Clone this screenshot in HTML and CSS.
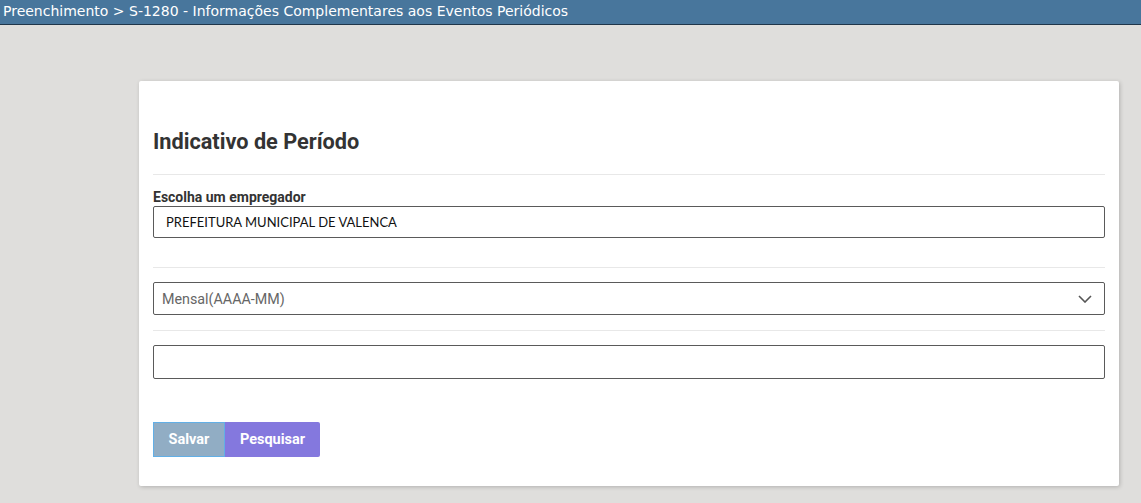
FILE: index.html
```html
<!DOCTYPE html>
<html>
<head>
<meta charset="utf-8">
<title>S-1280</title>
<link rel="stylesheet" href="styles.css">
</head>
<body>
<div id="top_bar">Preenchimento &gt; S-1280 - Informações Complementares aos Eventos Periódicos</div>
<div class="page">
<div class="card">
	<h2 class="card_title">Indicativo de Período</h2>
	<hr class="sep">
	<label class="field_label">Escolha um empregador</label>
	<div class="box employer">PREFEITURA MUNICIPAL DE VALENCA</div>
	<hr class="sep sep_gap">
	<div class="box select">
		<span>Mensal(AAAA-MM)</span>
		<svg width="14" height="8" viewBox="0 0 14 8"><path d="M1 1 L7 7 L13 1" fill="none" stroke="#555" stroke-width="1.6"/></svg>
	</div>
	<hr class="sep">
	<div class="box period"></div>
	<div class="buttons">
		<button class="btn btn_save">Salvar</button>
		<button class="btn btn_search">Pesquisar</button>
	</div>
</div>
</div>
</body>
</html>
```

FILE: styles.css
```css
html {
	background-color:#dfdedc;
}
body {
	margin:0;
	font-family:Roboto, sans-serif;
}
#top_bar {
	background-color:#48769c;
	border-bottom:1px solid #20364a;
	color:#ffffff;
	font-family:"DejaVu Sans", sans-serif;
	font-size:14px;
	height:24px;
	line-height:23px;
	padding-left:3px;
}
.page {
	padding:56px 22px 17px 139px;
}
.card {
	background-color:#ffffff;
	width:952px;
	padding:14px 14px 29px 14px;
	border-radius:2px;
	box-shadow:1px 1px 4px rgba(0,0,0,0.2);
}
.card_title {
	font-size:21.7px;
	font-weight:bold;
	color:#333333;
	margin:34px 0 20px 0;
}
.sep {
	border:none;
	border-top:1px solid #e8e8e8;
	margin:0 0 14px 0;
}
.sep_gap {
	margin-top:29px;
}
.field_label {
	display:block;
	font-size:14px;
	font-weight:bold;
	color:#333333;
	margin-bottom:1px;
}
.box {
	border:1px solid #5a5a5a;
	border-radius:2px;
	box-sizing:border-box;
	background:#ffffff;
}
.employer {
	height:32px;
	line-height:30px;
	padding-left:12px;
	font-family:Lato, sans-serif;
	font-size:13px;
	color:#111111;
}
.select {
	height:33px;
	display:flex;
	align-items:center;
	justify-content:space-between;
	padding:0 12px 0 8px;
	font-size:14.3px;
	color:#666666;
	margin-bottom:15px;
}
.period {
	height:34px;
}
.buttons {
	display:flex;
	margin-top:43px;
}
.btn {
	font-family:Roboto, sans-serif;
	font-size:14.5px;
	font-weight:bold;
	color:#ffffff;
	height:35px;
	border:none;
	cursor:pointer;
	padding:0;
}
.btn_save {
	background-color:#91adc4;
	border:1px solid #62afe6;
	width:72px;
}
.btn_search {
	background-color:#8478de;
	width:95px;
	border-radius:0 2px 2px 0;
}
```
